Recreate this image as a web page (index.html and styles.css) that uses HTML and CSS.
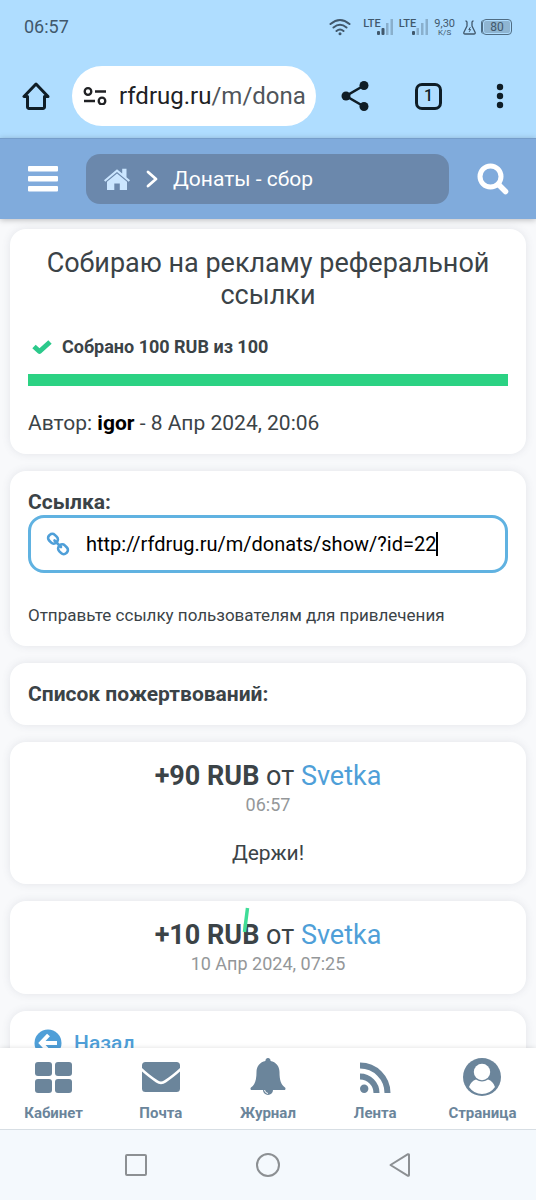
FILE: index.html
```html
<!DOCTYPE html>
<html lang="ru">
<head>
<meta charset="utf-8">
<meta name="viewport" content="width=device-width, initial-scale=1">
<title>Донаты - сбор</title>
<link rel="stylesheet" href="styles.css">
</head>
<body>
<div class="screen">
  <div class="statusbar">
    <span class="clock">06:57</span>
    <div class="indicators">
      <svg class="wifi" width="22" height="18" viewBox="0 0 22 18" fill="none" stroke="#41586c" stroke-width="2" stroke-linecap="round"><path d="M1.500 6Q11-2 20.500 6M4.500 9.500Q11 4 17.500 9.500M7.500 13Q11 10 14.500 13"/><circle cx="11" cy="15.800" r="1.500" fill="#41586c" stroke="none"/></svg>
      <div class="signal"><span class="lte">LTE</span>
        <svg width="17" height="18" viewBox="0 0 17 18" fill="#41586c"><rect x="1" y="13" width="3" height="4" rx="1"/><rect x="5.500" y="10" width="3" height="7" rx="1"/><rect x="10" y="5" width="2.500" height="12" opacity=".35"/><rect x="14.500" y="1" width="2.500" height="16" opacity=".35"/></svg></div>
      <div class="signal"><span class="lte">LTE</span>
        <svg width="17" height="18" viewBox="0 0 17 18" fill="#41586c"><rect x="1" y="13" width="3" height="4" rx="1"/><rect x="5.500" y="10" width="2.500" height="7" opacity=".35"/><rect x="10" y="5" width="2.500" height="12" opacity=".35"/><rect x="14.500" y="1" width="2.500" height="16" opacity=".35"/></svg></div>
      <div class="speed"><span>9,30</span><span class="unit">K/S</span></div>
      <svg class="flask" width="13" height="15" viewBox="0 0 13 15" fill="none" stroke="#41586c" stroke-width="1.300" stroke-linejoin="round" stroke-linecap="round"><path d="M3 1l1 1v4L.8 12.500Q.6 14 2 14h9q1.400 0 1.200-1.500L9 6V2l1-1"/><path d="M7.200 7.500L5.800 9.500h1.800l-1.200 2" stroke-width="1"/></svg>
      <div class="battery"><span class="battery-level">80</span></div>
    </div>
  </div>

  <div class="browserbar">
    <button class="icon-btn" aria-label="Главная страница"><svg width="28" height="28" viewBox="0 0 28 28" fill="none" stroke="#0f1d26" stroke-width="3" stroke-linejoin="round"><path d="M2 14.500h3.500V25a1.500 1.500 0 0 0 1.500 1.500h14a1.500 1.500 0 0 0 1.500-1.500V14.500H26L14 2z"/></svg></button>
    <div class="address">
      <svg width="24" height="18" viewBox="0 0 24 18" fill="none" stroke="#202124" stroke-width="2.300"><circle cx="5" cy="4.500" r="3.300"/><path d="M12 4.500h11M1 14h11"/><circle cx="19" cy="14" r="3.300"/></svg>
      <span class="url">rfdrug.ru<span class="path">/m/dona</span></span>
    </div>
    <div class="browser-actions">
      <button class="icon-btn" aria-label="Поделиться"><svg width="28" height="30" viewBox="0 0 28 30" fill="#0f1d26"><path d="M23 4.500L5 15l18 10.500" fill="none" stroke="#0f1d26" stroke-width="2.600"/><circle cx="23" cy="4.500" r="4.500"/><circle cx="5" cy="15" r="4.500"/><circle cx="23" cy="25.500" r="4.500"/></svg></button>
      <button class="icon-btn tabs" aria-label="Вкладки">1</button>
      <button class="icon-btn more" aria-label="Меню браузера"><svg width="8" height="26" viewBox="0 0 8 26" fill="#0f1d26"><circle cx="4" cy="4" r="3.200"/><circle cx="4" cy="13" r="3.200"/><circle cx="4" cy="22" r="3.200"/></svg></button>
    </div>
  </div>

  <header class="header">
    <button class="icon-btn" aria-label="Меню"><svg width="30" height="26" viewBox="0 0 30 26" fill="#fff"><rect y="0" width="30" height="5.500" rx="1"/><rect y="10" width="30" height="5.500" rx="1"/><rect y="20" width="30" height="5.500" rx="1"/></svg></button>
    <nav class="crumbs" aria-label="Навигация">
      <a href="#" aria-label="Главная"><svg width="28" height="22" viewBox="0 0 28 22" fill="#cbe6ff"><path d="M1 12.200L14 1.300l5.200 4.300V.8h4.300v8.500l3.500 2.900-1.300 1.600L14 4 2.300 13.800z"/><path d="M14 5.500l10 8.300V22h-7.200v-6.500h-5.500V22H4v-8.200z"/></svg></a>
      <svg width="12" height="18" viewBox="0 0 12 18" fill="none" stroke="#fff" stroke-width="2.800" stroke-linejoin="round" stroke-linecap="round"><path d="M2 2l8 7-8 7"/></svg>
      <span>Донаты - сбор</span>
    </nav>
    <button class="icon-btn" aria-label="Поиск"><svg width="32" height="32" viewBox="0 0 32 32" fill="none" stroke="#fff"><circle cx="13.500" cy="13.500" r="10.500" stroke-width="5"/><path d="M21.500 21.500l7 7" stroke-width="5.500" stroke-linecap="round"/></svg></button>
  </header>

  <main class="content">
    <section class="card">
      <h1 class="title">Собираю на рекламу реферальной ссылки</h1>
      <p class="collected"><svg width="20" height="16" viewBox="0 0 20 16" fill="none" stroke="#2bc98b" stroke-width="5" stroke-linejoin="round"><path d="M2 7.500l5.500 5L18 3"/></svg>Собрано 100 RUB из 100</p>
      <div class="bar" role="progressbar" aria-valuenow="100" aria-valuemin="0" aria-valuemax="100"><div class="bar-fill" style="width:100%"></div></div>
      <p class="author">Автор: <b>igor</b> - 8 Апр 2024, 20:06</p>
    </section>

    <section class="card">
      <label class="label" for="link">Ссылка:</label>
      <div class="field">
        <svg width="24" height="24" viewBox="0 0 24 24" fill="none" stroke="#4f9fd8" stroke-width="2.600" stroke-linecap="round"><rect x="2" y="2.700" width="10" height="8" rx="3.500" transform="rotate(45 7 6.700)"/><rect x="12" y="13.300" width="10" height="8" rx="3.500" transform="rotate(45 17 17.300)"/><path d="M8.500 8.500l6.500 6.500"/></svg>
        <input class="link-input" id="link" type="text" value="http://rfdrug.ru/m/donats/show/?id=22"><span class="caret"></span>
      </div>
      <p class="hint">Отправьте ссылку пользователям для привлечения</p>
    </section>

    <section class="card"><h2 class="label">Список пожертвований:</h2></section>

    <section class="card donation">
      <p class="amount"><b>+90 RUB</b> от <a href="#">Svetka</a></p>
      <time class="time">06:57</time>
      <p class="message">Держи!</p>
    </section>

    <section class="card donation">
      <p class="amount"><b>+10 RUB</b> от <a href="#">Svetka</a></p>
      <time class="time">10 Апр 2024, 07:25</time>
      <svg class="mark" width="8" height="26" viewBox="0 0 8 26" stroke="#3fdd98" stroke-width="3.500"><path d="M5.500 1L2.500 25"/></svg>
    </section>

    <section class="card back-card">
      <a class="back" href="#"><svg width="28" height="28" viewBox="0 0 28 28"><circle cx="14" cy="14" r="13.500" fill="#4f9fd8"/><path d="M14.500 6L7 14l7.500 8M8 14h15" fill="none" stroke="#fff" stroke-width="4"/></svg>Назад</a>
    </section>
  </main>

  <nav class="tabbar" aria-label="Разделы">
    <a href="#"><span class="tab-icon"><svg width="37" height="31" viewBox="0 0 37 31"><rect width="17" height="14" rx="3"/><rect x="20" width="17" height="14" rx="3"/><rect y="17" width="17" height="14" rx="3"/><rect x="20" y="17" width="17" height="14" rx="3"/></svg></span>Кабинет</a>
    <a href="#"><span class="tab-icon"><svg width="38" height="30" viewBox="0 0 38 30"><path d="M3.500 0h31A3.500 3.500 0 0 1 38 3.500V6C34 10 28 14.500 22 18.500q-3 2-6 0C10 14.500 4 10 0 6V3.500A3.500 3.500 0 0 1 3.500 0z"/><path d="M0 9.500c4 3.500 9 7.500 14 11q5 3.500 10 0C29 17 34 13 38 9.500v17a3.500 3.500 0 0 1-3.500 3.500h-31A3.500 3.500 0 0 1 0 26.500z"/></svg></span>Почта</a>
    <a href="#"><span class="tab-icon"><svg width="36" height="38" viewBox="0 0 36 38"><path d="M18 0a2.500 2.500 0 0 1 2.500 3C26 4 29.500 8.500 29.500 14c0 8 1.500 12.500 5.500 15.500 1 1 .5 2.500-1 2.500H23a5 5 0 0 1-10 0H2c-1.500 0-2-1.500-1-2.500C5 26.500 6.500 22 6.500 14c0-5.500 3.500-10 9-11A2.500 2.500 0 0 1 18 0z"/><path d="M14.500 32q.5 3 3.500 3.500" fill="none" stroke="#fff"/></svg></span>Журнал</a>
    <a href="#"><span class="tab-icon"><svg width="31" height="31" viewBox="0 0 31 31"><circle cx="4.200" cy="26.800" r="4.200"/><path d="M0 14.500A16.500 16.500 0 0 1 16.500 31M0 3.500A27.500 27.500 0 0 1 27.500 31" fill="none" stroke="#6b859b" stroke-width="6"/></svg></span>Лента</a>
    <a href="#"><span class="tab-icon"><svg width="38" height="38" viewBox="0 0 38 38"><circle cx="19" cy="19" r="19"/><circle cx="19" cy="14" r="8.200" fill="#fff"/><path d="M6 29q2-6 7-7.500 6 4 12 0 5 1.500 7 7.500-5 7-13 7T6 29z" fill="#fff"/></svg></span>Страница</a>
  </nav>

  <div class="sysnav">
    <button class="icon-btn" aria-label="Недавние"><svg width="22" height="22" viewBox="0 0 22 22"><rect x="1" y="1" width="20" height="20" rx="1"/></svg></button>
    <button class="icon-btn" aria-label="Домой"><svg width="24" height="24" viewBox="0 0 24 24"><circle cx="12" cy="12" r="11"/></svg></button>
    <button class="icon-btn" aria-label="Назад"><svg width="22" height="24" viewBox="0 0 22 24"><path d="M1.500 12L19 1.200q1-.2 1 .8v20q0 1-1 .8z" stroke-linejoin="round"/></svg></button>
  </div>
</div>
</body>
</html>
```
FILE: styles.css
```css
* { box-sizing: border-box; }

body {
  margin: 0;
  font-family: Roboto, "Liberation Sans", sans-serif;
  font-size: 21px;
  line-height: 26px;
  color: #3b4347;
  background: #f8f9fb;
}

h1, h2, p { margin: 0; }
a { color: #4f9fd8; text-decoration: none; }
svg { display: block; flex: none; }

.screen {
  display: flex;
  flex-direction: column;
  height: 100vh;
  overflow: hidden;
}

.icon-btn {
  display: flex;
  align-items: center;
  justify-content: center;
  padding: 0;
  border: 0;
  background: none;
  font: inherit;
  color: inherit;
}

/* Status bar */
.statusbar {
  display: flex;
  align-items: center;
  justify-content: space-between;
  height: 54px;
  flex: none;
  padding: 0 24px;
  background: #afddff;
  color: #41586c;
}
.clock { font-size: 18px; }
.indicators { display: flex; align-items: center; gap: 6px; }
.wifi { margin-right: 6px; }
.signal { display: flex; }
.lte { font-size: 11px; line-height: 12px; margin-right: -5px; font-weight: 500; }
.speed {
  display: flex;
  flex-direction: column;
  align-items: center;
  font-size: 11px;
  line-height: 11px;
}
.unit { font-size: 8px; line-height: 8px; }
.flask { margin-left: 2px; }
.battery {
  width: 30px;
  padding: 1px;
  border: 1px solid #4f6c83;
  border-radius: 4px;
  box-shadow: -2px 0 0 -1px #4f6c83;
}
.battery-level {
  display: block;
  font-size: 12px;
  line-height: 12px;
  text-align: center;
  background: #8fb5d2;
  border-radius: 2px;
}

/* Browser toolbar */
.browserbar {
  display: flex;
  align-items: center;
  gap: 22px;
  height: 84px;
  flex: none;
  padding: 0 32px 0 22px;
  background: #afddff;
}
.address {
  display: flex;
  align-items: center;
  gap: 12px;
  flex: 1;
  height: 60px;
  padding: 0 11px;
  border-radius: 30px;
  background: #fff;
  overflow: hidden;
}
.url { font-size: 24px; color: #202124; white-space: nowrap; }
.path { color: #50555a; }
.browser-actions { display: flex; align-items: center; gap: 46px; color: #0f1d26; margin-left: 3px; }
.more { margin-left: 8px; }
.tabs {
  width: 27px;
  height: 27px;
  border: 3px solid #0f1d26;
  border-radius: 7px;
  font-size: 16px;
  font-weight: 500;
}

/* Site header */
.header {
  display: flex;
  align-items: center;
  gap: 28px;
  height: 81px;
  flex: none;
  padding: 0 27px 0 28px;
  background: #80abdc;
  box-shadow: 0 1px 6px rgba(0, 0, 0, .25), inset 0 1px 0 #759dca;
  position: relative;
}
.crumbs {
  display: flex;
  align-items: center;
  gap: 15px;
  flex: 1;
  height: 50px;
  padding: 0 17px;
  border-radius: 14px;
  background: #6b88ac;
  color: #fff;
}

/* Cards */
.content {
  display: flex;
  flex-direction: column;
  gap: 17px;
  flex: 1;
  min-height: 0;
  padding: 10px 10px 0;
  overflow: hidden;
}
.card {
  flex: none;
  padding: 18px;
  border-radius: 16px;
  background: #fff;
  box-shadow: 0 0 8px rgba(70, 80, 110, .12);
}
.title {
  font-size: 27px;
  line-height: 32px;
  font-weight: 400;
  text-align: center;
}
.collected {
  display: flex;
  align-items: center;
  gap: 10px;
  padding: 23px 4px 14px;
  font-size: 18px;
  font-weight: 700;
}
.bar { height: 12px; background: #e5e9ec; }
.bar-fill { height: 100%; background: #2bd283; }
.author { padding-top: 24px; }
.author b { color: #000; }
.label { display: block; font-size: 21px; line-height: 26px; font-weight: 700; }
.field {
  display: flex;
  align-items: center;
  height: 58px;
  padding: 0 15px;
  border: 3px solid #60b2e1;
  border-radius: 16px;
}
.link-input {
  field-sizing: content;
  min-width: 0;
  margin-left: 16px;
  padding: 0;
  border: 0;
  outline: 0;
  background: none;
  font: inherit;
  font-size: 20px;
  color: #000;
}
.caret { width: 2px; height: 24px; background: #000; flex: none; }
.hint { padding-top: 29px; font-size: 17px; }
.donation { text-align: center; position: relative; }
.amount { font-size: 27px; line-height: 32px; }
.time { display: block; font-size: 18px; line-height: 25px; color: #949799; }
.message { padding-top: 23px; }
.mark { position: absolute; left: 45%; top: 6px; }
.back-card { padding-left: 24px; }
.back { display: flex; align-items: center; gap: 12px; font-weight: 500; }

/* Bottom tabs */
.tabbar {
  display: flex;
  flex: none;
  height: 81px;
  background: #fff;
  box-shadow: 0 0 5px rgba(0, 0, 0, .13);
  position: relative;
}
.tabbar a {
  display: flex;
  flex-direction: column;
  align-items: center;
  flex: 1 1 0;
  padding-top: 9px;
  font-size: 15px;
  line-height: 18px;
  font-weight: 700;
  color: #6b859b;
}
.tab-icon { display: flex; align-items: center; height: 40px; margin-bottom: 7px; }
.tab-icon svg { fill: #6b859b; }

/* System navigation */
.sysnav {
  display: flex;
  align-items: center;
  justify-content: center;
  gap: 109px;
  height: 71px;
  flex: none;
  background: #f4f9fd;
  border-top: 1px solid #d7dee4;
  position: relative;
}
.sysnav svg { fill: none; stroke: #8c9093; stroke-width: 2; }
```
